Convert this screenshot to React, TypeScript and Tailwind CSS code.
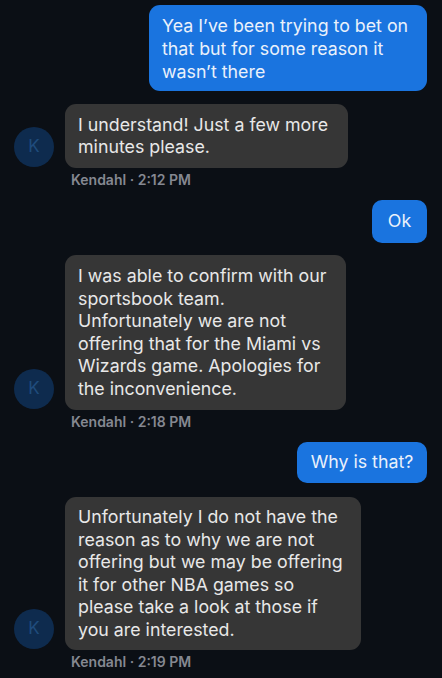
import React from "react";

const font = { fontFamily: "Inter, 'Open Sans', 'Liberation Sans', sans-serif" };

function Received({ lines, mt, time, w, py }: { lines: string[]; mt: string; time: string; w: string; py: string }) {
  return (
    <div className={mt}>
      <div className="flex items-end pl-[14px]">
        <div className="w-[40px] h-[40px] rounded-full bg-[#0e2b4e] flex items-center justify-center text-[#1f4b7c] text-[17px] mb-[1px]">
          K
        </div>
        <div
          className={`ml-[11px] bg-[#363636] text-[#e8e8e8] rounded-[11px] px-[13px] ${py} text-[17.8px] leading-[22.5px] ${w}`}
        >
          {lines.map((l, i) => (
            <div key={i}>{l}</div>
          ))}
        </div>
      </div>
      <div className="pl-[71px] mt-[3px] text-[14px] leading-[18px] font-semibold text-[#858891]">
        Kendahl · {time}
      </div>
    </div>
  );
}

export default function App() {
  return (
    <div style={font} className="w-[442px] h-[678px] bg-[#0b0f15] overflow-hidden pt-[5px]">
      <div className="flex justify-end pr-[15px]">
        <div className="w-[278px] bg-[#1a74df] text-[#eaf1fb] rounded-[11px] px-[13px] py-[8.5px] text-[17.8px] leading-[23px]">
          <div>Yea I’ve been trying to bet on</div>
          <div>that but for some reason it</div>
          <div>wasn’t there</div>
        </div>
      </div>
      <Received
        mt="mt-[13px]"
        w="w-[283px]"
        py="py-[9.5px]"
        time="2:12 PM"
        lines={["I understand! Just a few more", "minutes please."]}
      />
      <div className="flex justify-end pr-[15px] mt-[11px]">
        <div className="w-[55px] h-[43px] flex items-center justify-center bg-[#1a74df] text-[#eaf1fb] rounded-[10px] text-[17.8px]">
          Ok
        </div>
      </div>
      <Received
        mt="mt-[12px]"
        w="w-[281px]"
        py="py-[10px]"
        time="2:18 PM"
        lines={[
          "I was able to confirm with our",
          "sportsbook team.",
          "Unfortunately we are not",
          "offering that for the Miami vs",
          "Wizards game. Apologies for",
          "the inconvenience.",
        ]}
      />
      <div className="flex justify-end pr-[15px] mt-[11px]">
        <div className="w-[130px] h-[41px] flex items-center justify-center bg-[#1a74df] text-[#eaf1fb] rounded-[10px] text-[17.8px]">
          Why is that?
        </div>
      </div>
      <Received
        mt="mt-[14px]"
        w="w-[296px]"
        py="py-[9px]"
        time="2:19 PM"
        lines={[
          "Unfortunately I do not have the",
          "reason as to why we are not",
          "offering but we may be offering",
          "it for other NBA games so",
          "please take a look at those if",
          "you are interested.",
        ]}
      />
    </div>
  );
}
